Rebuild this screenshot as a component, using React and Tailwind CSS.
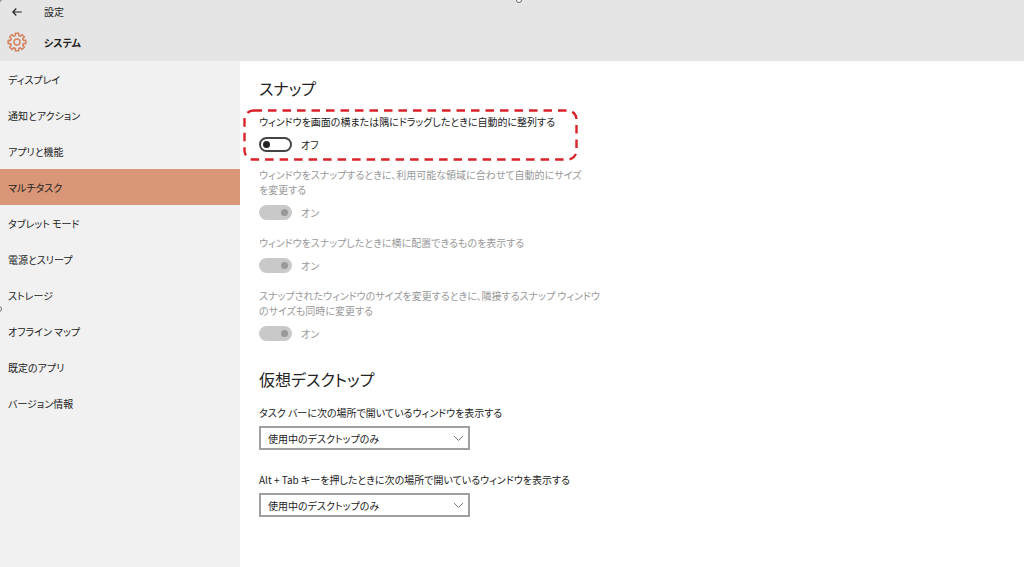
import { useState } from 'react';

const menuItems = [
  'ディスプレイ',
  '通知とアクション',
  'アプリと機能',
  'マルチタスク',
  'タブレット モード',
  '電源とスリープ',
  'ストレージ',
  'オフライン マップ',
  '既定のアプリ',
  'バージョン情報',
];

// eight teeth around the centre: [radius, angle offset] for each corner
const toothCorners = [[6.6, -14], [9, -11], [9, 11], [6.6, 14]];
const gearPoints = Array.from({ length: 8 }, (_, i) =>
  toothCorners.map(([r, offset]) => {
    const angle = ((i * 45 + offset) * Math.PI) / 180;
    return `${(10 + r * Math.sin(angle)).toFixed(2)},${(10 - r * Math.cos(angle)).toFixed(2)}`;
  }).join(' ')
).join(' ');

const BackIcon = () => (
  <svg width="10" height="8" viewBox="0 0 10 8" fill="none" stroke="#222" strokeWidth="1.2">
    <path d="M9.8 4H0.8M4.3 0.5L0.8 4L4.3 7.5" />
  </svg>
);

const GearIcon = () => (
  <svg width="20" height="20" viewBox="0 0 20 20" fill="none" stroke="#d58260" strokeWidth="1.5" strokeLinejoin="round">
    <polygon points={gearPoints} />
    <circle cx="10" cy="10" r="3" />
  </svg>
);

const Toggle = ({ id, checked, disabled, onChange }) => (
  <span className="relative inline-flex h-[15px] w-[33px] shrink-0">
    <input
      id={id}
      type="checkbox"
      role="switch"
      checked={checked}
      disabled={disabled}
      onChange={onChange}
      className="peer h-full w-full appearance-none rounded-full border-2 border-[#444] bg-white disabled:border-[#c9c9c9] disabled:bg-[#c9c9c9]"
    />
    <span className="pointer-events-none absolute top-1 left-1 h-[7px] w-[7px] rounded-full bg-[#222] peer-checked:right-1 peer-checked:left-auto peer-disabled:bg-[#999]" />
  </span>
);

const Setting = ({ id, label, checked, disabled, onChange }) => (
  <div className={disabled ? 'text-[#999]' : 'text-[#222]'}>
    <label htmlFor={id} className="block whitespace-pre-line">{label}</label>
    <div className="mt-2 flex items-center gap-[9px]">
      <Toggle id={id} checked={checked} disabled={disabled} onChange={onChange} />
      <span>{checked ? 'オン' : 'オフ'}</span>
    </div>
  </div>
);

const SelectField = ({ id, label }) => (
  <div>
    <label htmlFor={id} className="block">{label}</label>
    <div className="relative mt-[6px] w-[211px]">
      <select id={id} className="block h-6 w-full appearance-none border-2 border-[#a0a0a0] bg-white pl-[7px]">
        <option>使用中のデスクトップのみ</option>
        <option>すべてのデスクトップ</option>
      </select>
      <svg className="pointer-events-none absolute top-[9px] right-[6px]" width="11" height="7" viewBox="0 0 11 7" fill="none" stroke="#777">
        <path d="M1 1L5.5 5.5L10 1" />
      </svg>
    </div>
  </div>
);

export default function App() {
  const [active, setActive] = useState('マルチタスク');
  const [snap, setSnap] = useState(false);

  return (
    <div className="relative flex min-h-screen flex-col bg-white font-['Noto_Sans_CJK_JP',sans-serif] text-[10px] leading-[15px] text-[#222] [font-feature-settings:'palt']">
      <header className="bg-[#e5e5e5]">
        <div className="flex h-[23px] items-center">
          <button aria-label="戻る" className="flex w-11 justify-start pl-3">
            <BackIcon />
          </button>
          <span>設定</span>
        </div>
        <div className="flex h-[38px] items-center">
          <div className="w-11 pl-[7px]">
            <GearIcon />
          </div>
          <h1 className="font-bold">システム</h1>
        </div>
      </header>

      <div className="flex flex-1">
        <nav className="w-60 shrink-0 bg-[#f1f1f1]">
          {menuItems.map((item) => (
            <a
              key={item}
              href="#"
              onClick={() => setActive(item)}
              className={`flex h-9 items-center px-2 ${item === active ? 'bg-[#da9777]' : ''}`}
            >
              {item}
            </a>
          ))}
        </nav>

        <main className="flex-1 pt-[15px] pl-[19px]">
          <section>
            <h2 className="text-base leading-6">スナップ</h2>
            <div className="mt-[14px] flex flex-col gap-[15px]">
              <div className="relative">
                <Setting
                  id="snap"
                  label="ウィンドウを画面の横または隅にドラッグしたときに自動的に整列する"
                  checked={snap}
                  onChange={() => setSnap(!snap)}
                />
                <svg className="pointer-events-none absolute -top-[5px] -left-4" width="336" height="52" viewBox="0 0 336 52" fill="none">
                  <rect x="1.5" y="1.5" width="332" height="49" rx="9" stroke="#d8232a" strokeWidth="2.4" strokeDasharray="8.5 6" />
                </svg>
              </div>
              <Setting
                id="resize"
                label={'ウィンドウをスナップするときに、利用可能な領域に合わせて自動的にサイズ\nを変更する'}
                checked
                disabled
              />
              <Setting id="suggest" label="ウィンドウをスナップしたときに横に配置できるものを表示する" checked disabled />
              <Setting
                id="adjacent"
                label={'スナップされたウィンドウのサイズを変更するときに、隣接するスナップ ウィンドウ\nのサイズも同時に変更する'}
                checked
                disabled
              />
            </div>
          </section>

          <section className="mt-[26px]">
            <h2 className="text-base leading-6">仮想デスクトップ</h2>
            <div className="mt-[14px] flex flex-col gap-[22px]">
              <SelectField id="taskbar" label="タスク バーに次の場所で開いているウィンドウを表示する" />
              <SelectField id="alttab" label="Alt + Tab キーを押したときに次の場所で開いているウィンドウを表示する" />
            </div>
          </section>
        </main>
      </div>

      {/* selection handles */}
      <span className="absolute -top-[3px] left-[516px] h-[6px] w-[6px] rounded-full border border-[#666] bg-white" />
      <span className="absolute top-[306px] -left-[4px] h-[6px] w-[6px] rounded-full border border-[#666] bg-white" />
      <span className="absolute -top-[4px] -left-[4px] h-[6px] w-[6px] rounded-full border border-[#666] bg-white" />
    </div>
  );
}
